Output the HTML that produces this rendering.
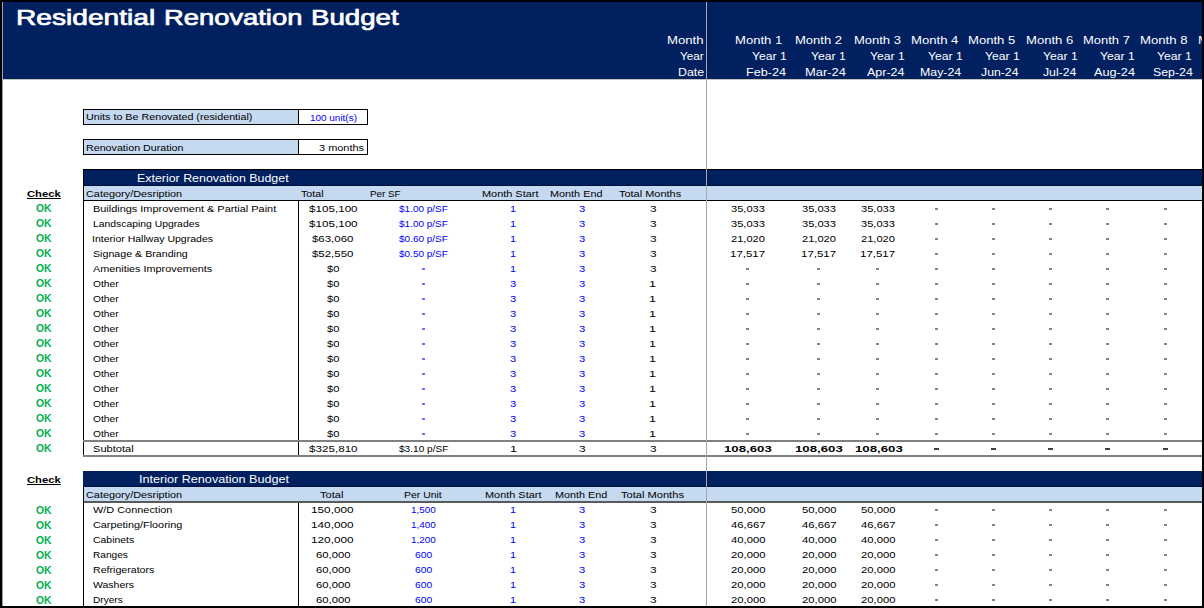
<!DOCTYPE html>
<html><head><meta charset="utf-8"><style>
html,body{margin:0;padding:0;width:1204px;height:608px;overflow:hidden;background:#fff}
#r{position:relative;width:1204px;height:608px;overflow:hidden;background:#fff}
#r>div{position:absolute}
.t{white-space:nowrap;font-family:"Liberation Sans",sans-serif;line-height:normal;transform-origin:0 0}
</style></head><body><div id="r">
<div style="left:3px;top:2px;width:1199px;height:77px;background:#002060"></div>
<div style="left:83px;top:109px;width:285px;height:16px;background:#000"></div>
<div style="left:84px;top:110px;width:214px;height:14px;background:#C5D9F1"></div>
<div style="left:299px;top:110px;width:68px;height:14px;background:#fff"></div>
<div style="left:83px;top:139px;width:285px;height:16px;background:#000"></div>
<div style="left:84px;top:140px;width:214px;height:14px;background:#C5D9F1"></div>
<div style="left:299px;top:140px;width:68px;height:14px;background:#fff"></div>
<div style="left:83px;top:169px;width:1119px;height:1px;background:#000"></div>
<div style="left:83px;top:170px;width:1119px;height:16px;background:#002060"></div>
<div style="left:83px;top:185px;width:1119px;height:1px;background:#00103a"></div>
<div style="left:83px;top:186px;width:1119px;height:14px;background:#C5D9F1"></div>
<div style="left:83px;top:169px;width:1px;height:31px;background:#000"></div>
<div style="left:83px;top:200px;width:1119px;height:1px;background:#000"></div>
<div style="left:935px;top:208px;width:3px;height:2px;background:#858585"></div>
<div style="left:992px;top:208px;width:3px;height:2px;background:#858585"></div>
<div style="left:1049px;top:208px;width:3px;height:2px;background:#858585"></div>
<div style="left:1106px;top:208px;width:3px;height:2px;background:#858585"></div>
<div style="left:1164px;top:208px;width:3px;height:2px;background:#858585"></div>
<div style="left:935px;top:223px;width:3px;height:2px;background:#858585"></div>
<div style="left:992px;top:223px;width:3px;height:2px;background:#858585"></div>
<div style="left:1049px;top:223px;width:3px;height:2px;background:#858585"></div>
<div style="left:1106px;top:223px;width:3px;height:2px;background:#858585"></div>
<div style="left:1164px;top:223px;width:3px;height:2px;background:#858585"></div>
<div style="left:935px;top:238px;width:3px;height:2px;background:#858585"></div>
<div style="left:992px;top:238px;width:3px;height:2px;background:#858585"></div>
<div style="left:1049px;top:238px;width:3px;height:2px;background:#858585"></div>
<div style="left:1106px;top:238px;width:3px;height:2px;background:#858585"></div>
<div style="left:1164px;top:238px;width:3px;height:2px;background:#858585"></div>
<div style="left:935px;top:253px;width:3px;height:2px;background:#858585"></div>
<div style="left:992px;top:253px;width:3px;height:2px;background:#858585"></div>
<div style="left:1049px;top:253px;width:3px;height:2px;background:#858585"></div>
<div style="left:1106px;top:253px;width:3px;height:2px;background:#858585"></div>
<div style="left:1164px;top:253px;width:3px;height:2px;background:#858585"></div>
<div style="left:422px;top:268px;width:3px;height:2px;background:#7070ff"></div>
<div style="left:746px;top:268px;width:3px;height:2px;background:#858585"></div>
<div style="left:817px;top:268px;width:3px;height:2px;background:#858585"></div>
<div style="left:876px;top:268px;width:3px;height:2px;background:#858585"></div>
<div style="left:935px;top:268px;width:3px;height:2px;background:#858585"></div>
<div style="left:992px;top:268px;width:3px;height:2px;background:#858585"></div>
<div style="left:1049px;top:268px;width:3px;height:2px;background:#858585"></div>
<div style="left:1106px;top:268px;width:3px;height:2px;background:#858585"></div>
<div style="left:1164px;top:268px;width:3px;height:2px;background:#858585"></div>
<div style="left:422px;top:283px;width:3px;height:2px;background:#7070ff"></div>
<div style="left:746px;top:283px;width:3px;height:2px;background:#858585"></div>
<div style="left:817px;top:283px;width:3px;height:2px;background:#858585"></div>
<div style="left:876px;top:283px;width:3px;height:2px;background:#858585"></div>
<div style="left:935px;top:283px;width:3px;height:2px;background:#858585"></div>
<div style="left:992px;top:283px;width:3px;height:2px;background:#858585"></div>
<div style="left:1049px;top:283px;width:3px;height:2px;background:#858585"></div>
<div style="left:1106px;top:283px;width:3px;height:2px;background:#858585"></div>
<div style="left:1164px;top:283px;width:3px;height:2px;background:#858585"></div>
<div style="left:422px;top:298px;width:3px;height:2px;background:#7070ff"></div>
<div style="left:746px;top:298px;width:3px;height:2px;background:#858585"></div>
<div style="left:817px;top:298px;width:3px;height:2px;background:#858585"></div>
<div style="left:876px;top:298px;width:3px;height:2px;background:#858585"></div>
<div style="left:935px;top:298px;width:3px;height:2px;background:#858585"></div>
<div style="left:992px;top:298px;width:3px;height:2px;background:#858585"></div>
<div style="left:1049px;top:298px;width:3px;height:2px;background:#858585"></div>
<div style="left:1106px;top:298px;width:3px;height:2px;background:#858585"></div>
<div style="left:1164px;top:298px;width:3px;height:2px;background:#858585"></div>
<div style="left:422px;top:313px;width:3px;height:2px;background:#7070ff"></div>
<div style="left:746px;top:313px;width:3px;height:2px;background:#858585"></div>
<div style="left:817px;top:313px;width:3px;height:2px;background:#858585"></div>
<div style="left:876px;top:313px;width:3px;height:2px;background:#858585"></div>
<div style="left:935px;top:313px;width:3px;height:2px;background:#858585"></div>
<div style="left:992px;top:313px;width:3px;height:2px;background:#858585"></div>
<div style="left:1049px;top:313px;width:3px;height:2px;background:#858585"></div>
<div style="left:1106px;top:313px;width:3px;height:2px;background:#858585"></div>
<div style="left:1164px;top:313px;width:3px;height:2px;background:#858585"></div>
<div style="left:422px;top:328px;width:3px;height:2px;background:#7070ff"></div>
<div style="left:746px;top:328px;width:3px;height:2px;background:#858585"></div>
<div style="left:817px;top:328px;width:3px;height:2px;background:#858585"></div>
<div style="left:876px;top:328px;width:3px;height:2px;background:#858585"></div>
<div style="left:935px;top:328px;width:3px;height:2px;background:#858585"></div>
<div style="left:992px;top:328px;width:3px;height:2px;background:#858585"></div>
<div style="left:1049px;top:328px;width:3px;height:2px;background:#858585"></div>
<div style="left:1106px;top:328px;width:3px;height:2px;background:#858585"></div>
<div style="left:1164px;top:328px;width:3px;height:2px;background:#858585"></div>
<div style="left:422px;top:343px;width:3px;height:2px;background:#7070ff"></div>
<div style="left:746px;top:343px;width:3px;height:2px;background:#858585"></div>
<div style="left:817px;top:343px;width:3px;height:2px;background:#858585"></div>
<div style="left:876px;top:343px;width:3px;height:2px;background:#858585"></div>
<div style="left:935px;top:343px;width:3px;height:2px;background:#858585"></div>
<div style="left:992px;top:343px;width:3px;height:2px;background:#858585"></div>
<div style="left:1049px;top:343px;width:3px;height:2px;background:#858585"></div>
<div style="left:1106px;top:343px;width:3px;height:2px;background:#858585"></div>
<div style="left:1164px;top:343px;width:3px;height:2px;background:#858585"></div>
<div style="left:422px;top:358px;width:3px;height:2px;background:#7070ff"></div>
<div style="left:746px;top:358px;width:3px;height:2px;background:#858585"></div>
<div style="left:817px;top:358px;width:3px;height:2px;background:#858585"></div>
<div style="left:876px;top:358px;width:3px;height:2px;background:#858585"></div>
<div style="left:935px;top:358px;width:3px;height:2px;background:#858585"></div>
<div style="left:992px;top:358px;width:3px;height:2px;background:#858585"></div>
<div style="left:1049px;top:358px;width:3px;height:2px;background:#858585"></div>
<div style="left:1106px;top:358px;width:3px;height:2px;background:#858585"></div>
<div style="left:1164px;top:358px;width:3px;height:2px;background:#858585"></div>
<div style="left:422px;top:373px;width:3px;height:2px;background:#7070ff"></div>
<div style="left:746px;top:373px;width:3px;height:2px;background:#858585"></div>
<div style="left:817px;top:373px;width:3px;height:2px;background:#858585"></div>
<div style="left:876px;top:373px;width:3px;height:2px;background:#858585"></div>
<div style="left:935px;top:373px;width:3px;height:2px;background:#858585"></div>
<div style="left:992px;top:373px;width:3px;height:2px;background:#858585"></div>
<div style="left:1049px;top:373px;width:3px;height:2px;background:#858585"></div>
<div style="left:1106px;top:373px;width:3px;height:2px;background:#858585"></div>
<div style="left:1164px;top:373px;width:3px;height:2px;background:#858585"></div>
<div style="left:422px;top:388px;width:3px;height:2px;background:#7070ff"></div>
<div style="left:746px;top:388px;width:3px;height:2px;background:#858585"></div>
<div style="left:817px;top:388px;width:3px;height:2px;background:#858585"></div>
<div style="left:876px;top:388px;width:3px;height:2px;background:#858585"></div>
<div style="left:935px;top:388px;width:3px;height:2px;background:#858585"></div>
<div style="left:992px;top:388px;width:3px;height:2px;background:#858585"></div>
<div style="left:1049px;top:388px;width:3px;height:2px;background:#858585"></div>
<div style="left:1106px;top:388px;width:3px;height:2px;background:#858585"></div>
<div style="left:1164px;top:388px;width:3px;height:2px;background:#858585"></div>
<div style="left:422px;top:403px;width:3px;height:2px;background:#7070ff"></div>
<div style="left:746px;top:403px;width:3px;height:2px;background:#858585"></div>
<div style="left:817px;top:403px;width:3px;height:2px;background:#858585"></div>
<div style="left:876px;top:403px;width:3px;height:2px;background:#858585"></div>
<div style="left:935px;top:403px;width:3px;height:2px;background:#858585"></div>
<div style="left:992px;top:403px;width:3px;height:2px;background:#858585"></div>
<div style="left:1049px;top:403px;width:3px;height:2px;background:#858585"></div>
<div style="left:1106px;top:403px;width:3px;height:2px;background:#858585"></div>
<div style="left:1164px;top:403px;width:3px;height:2px;background:#858585"></div>
<div style="left:422px;top:418px;width:3px;height:2px;background:#7070ff"></div>
<div style="left:746px;top:418px;width:3px;height:2px;background:#858585"></div>
<div style="left:817px;top:418px;width:3px;height:2px;background:#858585"></div>
<div style="left:876px;top:418px;width:3px;height:2px;background:#858585"></div>
<div style="left:935px;top:418px;width:3px;height:2px;background:#858585"></div>
<div style="left:992px;top:418px;width:3px;height:2px;background:#858585"></div>
<div style="left:1049px;top:418px;width:3px;height:2px;background:#858585"></div>
<div style="left:1106px;top:418px;width:3px;height:2px;background:#858585"></div>
<div style="left:1164px;top:418px;width:3px;height:2px;background:#858585"></div>
<div style="left:422px;top:433px;width:3px;height:2px;background:#7070ff"></div>
<div style="left:746px;top:433px;width:3px;height:2px;background:#858585"></div>
<div style="left:817px;top:433px;width:3px;height:2px;background:#858585"></div>
<div style="left:876px;top:433px;width:3px;height:2px;background:#858585"></div>
<div style="left:935px;top:433px;width:3px;height:2px;background:#858585"></div>
<div style="left:992px;top:433px;width:3px;height:2px;background:#858585"></div>
<div style="left:1049px;top:433px;width:3px;height:2px;background:#858585"></div>
<div style="left:1106px;top:433px;width:3px;height:2px;background:#858585"></div>
<div style="left:1164px;top:433px;width:3px;height:2px;background:#858585"></div>
<div style="left:83px;top:200px;width:1px;height:257px;background:#000"></div>
<div style="left:298px;top:201px;width:1px;height:256px;background:#000"></div>
<div style="left:83px;top:440px;width:1119px;height:2px;background:#808080"></div>
<div style="left:83px;top:455px;width:1119px;height:2px;background:#808080"></div>
<div style="left:934px;top:448px;width:5px;height:2px;background:#404040"></div>
<div style="left:991px;top:448px;width:5px;height:2px;background:#404040"></div>
<div style="left:1048px;top:448px;width:5px;height:2px;background:#404040"></div>
<div style="left:1105px;top:448px;width:5px;height:2px;background:#404040"></div>
<div style="left:1163px;top:448px;width:5px;height:2px;background:#404040"></div>
<div style="left:83px;top:471px;width:1119px;height:16px;background:#002060"></div>
<div style="left:83px;top:486px;width:1119px;height:1px;background:#00103a"></div>
<div style="left:83px;top:487px;width:1119px;height:14px;background:#C5D9F1"></div>
<div style="left:935px;top:509px;width:3px;height:2px;background:#858585"></div>
<div style="left:992px;top:509px;width:3px;height:2px;background:#858585"></div>
<div style="left:1049px;top:509px;width:3px;height:2px;background:#858585"></div>
<div style="left:1106px;top:509px;width:3px;height:2px;background:#858585"></div>
<div style="left:1164px;top:509px;width:3px;height:2px;background:#858585"></div>
<div style="left:935px;top:524px;width:3px;height:2px;background:#858585"></div>
<div style="left:992px;top:524px;width:3px;height:2px;background:#858585"></div>
<div style="left:1049px;top:524px;width:3px;height:2px;background:#858585"></div>
<div style="left:1106px;top:524px;width:3px;height:2px;background:#858585"></div>
<div style="left:1164px;top:524px;width:3px;height:2px;background:#858585"></div>
<div style="left:935px;top:539px;width:3px;height:2px;background:#858585"></div>
<div style="left:992px;top:539px;width:3px;height:2px;background:#858585"></div>
<div style="left:1049px;top:539px;width:3px;height:2px;background:#858585"></div>
<div style="left:1106px;top:539px;width:3px;height:2px;background:#858585"></div>
<div style="left:1164px;top:539px;width:3px;height:2px;background:#858585"></div>
<div style="left:935px;top:554px;width:3px;height:2px;background:#858585"></div>
<div style="left:992px;top:554px;width:3px;height:2px;background:#858585"></div>
<div style="left:1049px;top:554px;width:3px;height:2px;background:#858585"></div>
<div style="left:1106px;top:554px;width:3px;height:2px;background:#858585"></div>
<div style="left:1164px;top:554px;width:3px;height:2px;background:#858585"></div>
<div style="left:935px;top:569px;width:3px;height:2px;background:#858585"></div>
<div style="left:992px;top:569px;width:3px;height:2px;background:#858585"></div>
<div style="left:1049px;top:569px;width:3px;height:2px;background:#858585"></div>
<div style="left:1106px;top:569px;width:3px;height:2px;background:#858585"></div>
<div style="left:1164px;top:569px;width:3px;height:2px;background:#858585"></div>
<div style="left:935px;top:584px;width:3px;height:2px;background:#858585"></div>
<div style="left:992px;top:584px;width:3px;height:2px;background:#858585"></div>
<div style="left:1049px;top:584px;width:3px;height:2px;background:#858585"></div>
<div style="left:1106px;top:584px;width:3px;height:2px;background:#858585"></div>
<div style="left:1164px;top:584px;width:3px;height:2px;background:#858585"></div>
<div style="left:935px;top:599px;width:3px;height:2px;background:#858585"></div>
<div style="left:992px;top:599px;width:3px;height:2px;background:#858585"></div>
<div style="left:1049px;top:599px;width:3px;height:2px;background:#858585"></div>
<div style="left:1106px;top:599px;width:3px;height:2px;background:#858585"></div>
<div style="left:1164px;top:599px;width:3px;height:2px;background:#858585"></div>
<div style="left:83px;top:501px;width:1119px;height:2px;background:#5a5a5a"></div>
<div style="left:83px;top:487px;width:1px;height:119px;background:#000"></div>
<div style="left:298px;top:503px;width:1px;height:103px;background:#000"></div>
<div class="t" style="left:15.64px;top:6.04px;font-size:21.5px;font-weight:normal;color:#fff;transform:scaleX(1.3087);-webkit-text-stroke:0.7px #fff;">Residential</div>
<div class="t" style="left:163.98px;top:6.04px;font-size:21.5px;font-weight:normal;color:#fff;transform:scaleX(1.2720);-webkit-text-stroke:0.7px #fff;">Renovation</div>
<div class="t" style="left:311.06px;top:6.04px;font-size:21.5px;font-weight:normal;color:#fff;transform:scaleX(1.2866);-webkit-text-stroke:0.7px #fff;">Budget</div>
<div class="t" style="left:667.40px;top:33.84px;font-size:11px;font-weight:normal;color:#fff;transform:scaleX(1.1966);">Month</div>
<div class="t" style="left:680.30px;top:49.65px;font-size:11px;font-weight:normal;color:#fff;transform:scaleX(1.0636);">Year</div>
<div class="t" style="left:678.18px;top:65.75px;font-size:11px;font-weight:normal;color:#fff;transform:scaleX(1.1227);">Date</div>
<div class="t" style="left:735.21px;top:33.84px;font-size:11px;font-weight:normal;color:#fff;transform:scaleX(1.1872);">Month 1</div>
<div class="t" style="left:751.90px;top:49.65px;font-size:11px;font-weight:normal;color:#fff;transform:scaleX(1.1065);">Year 1</div>
<div class="t" style="left:746.35px;top:65.75px;font-size:11px;font-weight:normal;color:#fff;transform:scaleX(1.1500);">Feb-24</div>
<div class="t" style="left:794.52px;top:33.84px;font-size:11px;font-weight:normal;color:#fff;transform:scaleX(1.1846);">Month 2</div>
<div class="t" style="left:811.20px;top:49.65px;font-size:11px;font-weight:normal;color:#fff;transform:scaleX(1.1065);">Year 1</div>
<div class="t" style="left:804.53px;top:65.75px;font-size:11px;font-weight:normal;color:#fff;transform:scaleX(1.1706);">Mar-24</div>
<div class="t" style="left:853.52px;top:33.84px;font-size:11px;font-weight:normal;color:#fff;transform:scaleX(1.1795);">Month 3</div>
<div class="t" style="left:870.20px;top:49.65px;font-size:11px;font-weight:normal;color:#fff;transform:scaleX(1.1065);">Year 1</div>
<div class="t" style="left:867.10px;top:65.75px;font-size:11px;font-weight:normal;color:#fff;transform:scaleX(1.1333);">Apr-24</div>
<div class="t" style="left:910.91px;top:33.84px;font-size:11px;font-weight:normal;color:#fff;transform:scaleX(1.1923);">Month 4</div>
<div class="t" style="left:927.60px;top:49.65px;font-size:11px;font-weight:normal;color:#fff;transform:scaleX(1.1065);">Year 1</div>
<div class="t" style="left:920.38px;top:65.75px;font-size:11px;font-weight:normal;color:#fff;transform:scaleX(1.1222);">May-24</div>
<div class="t" style="left:968.21px;top:33.84px;font-size:11px;font-weight:normal;color:#fff;transform:scaleX(1.1872);">Month 5</div>
<div class="t" style="left:984.90px;top:49.65px;font-size:11px;font-weight:normal;color:#fff;transform:scaleX(1.1065);">Year 1</div>
<div class="t" style="left:981.30px;top:65.75px;font-size:11px;font-weight:normal;color:#fff;transform:scaleX(1.1147);">Jun-24</div>
<div class="t" style="left:1025.61px;top:33.84px;font-size:11px;font-weight:normal;color:#fff;transform:scaleX(1.1897);">Month 6</div>
<div class="t" style="left:1042.50px;top:49.65px;font-size:11px;font-weight:normal;color:#fff;transform:scaleX(1.1065);">Year 1</div>
<div class="t" style="left:1043.40px;top:65.75px;font-size:11px;font-weight:normal;color:#fff;transform:scaleX(1.1133);">Jul-24</div>
<div class="t" style="left:1083.12px;top:33.84px;font-size:11px;font-weight:normal;color:#fff;transform:scaleX(1.1795);">Month 7</div>
<div class="t" style="left:1100.00px;top:49.65px;font-size:11px;font-weight:normal;color:#fff;transform:scaleX(1.1065);">Year 1</div>
<div class="t" style="left:1093.90px;top:65.75px;font-size:11px;font-weight:normal;color:#fff;transform:scaleX(1.1543);">Aug-24</div>
<div class="t" style="left:1140.00px;top:33.84px;font-size:11px;font-weight:normal;color:#fff;transform:scaleX(1.1974);">Month 8</div>
<div class="t" style="left:1157.40px;top:49.65px;font-size:11px;font-weight:normal;color:#fff;transform:scaleX(1.1065);">Year 1</div>
<div class="t" style="left:1152.50px;top:65.75px;font-size:11px;font-weight:normal;color:#fff;transform:scaleX(1.1200);">Sep-24</div>
<div class="t" style="left:1197.51px;top:33.84px;font-size:11px;font-weight:normal;color:#fff;transform:scaleX(1.1872);">Month 9</div>
<div class="t" style="left:85.50px;top:112.36px;font-size:9px;font-weight:normal;color:#000;transform:scaleX(1.1921);">Units to Be Renovated (residential)</div>
<div class="t" style="left:309.80px;top:112.67px;font-size:9.2px;font-weight:normal;color:#0000FF;transform:scaleX(1.0814);">100 unit(s)</div>
<div class="t" style="left:86.00px;top:142.66px;font-size:9px;font-weight:normal;color:#000;transform:scaleX(1.1878);">Renovation Duration</div>
<div class="t" style="left:319.00px;top:142.02px;font-size:9.7px;font-weight:normal;color:#000;transform:scaleX(1.1300);">3 months</div>
<div class="t" style="left:136.67px;top:172.04px;font-size:11px;font-weight:normal;color:#fff;transform:scaleX(1.1269);">Exterior Renovation Budget</div>
<div class="t" style="left:85.50px;top:188.75px;font-size:9px;font-weight:normal;color:#000;transform:scaleX(1.2089);">Category/Desription</div>
<div class="t" style="left:301.10px;top:188.75px;font-size:9px;font-weight:normal;color:#000;transform:scaleX(1.1895);">Total</div>
<div class="t" style="left:369.70px;top:188.75px;font-size:9px;font-weight:normal;color:#000;transform:scaleX(1.0929);">Per SF</div>
<div class="t" style="left:481.50px;top:188.75px;font-size:9px;font-weight:normal;color:#000;transform:scaleX(1.2128);">Month Start</div>
<div class="t" style="left:550.30px;top:188.75px;font-size:9px;font-weight:normal;color:#000;transform:scaleX(1.2047);">Month End</div>
<div class="t" style="left:618.90px;top:188.75px;font-size:9px;font-weight:normal;color:#000;transform:scaleX(1.2176);">Total Months</div>
<div class="t" style="left:26.70px;top:187.72px;font-size:9.7px;font-weight:bold;color:#000;transform:scaleX(1.1586);text-decoration:underline;">Check</div>
<div class="t" style="left:36.25px;top:203.28px;font-size:10.3px;font-weight:bold;color:#00B050;transform:scaleX(1.0067);">OK</div>
<div class="t" style="left:93.30px;top:203.66px;font-size:9px;font-weight:normal;color:#000;transform:scaleX(1.2126);">Buildings Improvement &amp; Partial Paint</div>
<div class="t" style="left:308.95px;top:203.02px;font-size:9.7px;font-weight:normal;color:#000;transform:scaleX(1.2025);">$105,100</div>
<div class="t" style="left:399.05px;top:204.07px;font-size:9.2px;font-weight:normal;color:#0000FF;transform:scaleX(1.0867);">$1.00 p/SF</div>
<div class="t" style="left:510.45px;top:204.07px;font-size:9.2px;font-weight:normal;color:#0000FF;transform:scaleX(1.1800);">1</div>
<div class="t" style="left:578.95px;top:204.07px;font-size:9.2px;font-weight:normal;color:#0000FF;transform:scaleX(1.2200);">3</div>
<div class="t" style="left:649.55px;top:203.02px;font-size:9.7px;font-weight:normal;color:#000;transform:scaleX(1.2200);">3</div>
<div class="t" style="left:731.10px;top:203.02px;font-size:9.7px;font-weight:normal;color:#000;transform:scaleX(1.1467);">35,033</div>
<div class="t" style="left:801.90px;top:203.02px;font-size:9.7px;font-weight:normal;color:#000;transform:scaleX(1.1467);">35,033</div>
<div class="t" style="left:861.20px;top:203.02px;font-size:9.7px;font-weight:normal;color:#000;transform:scaleX(1.1467);">35,033</div>
<div class="t" style="left:36.25px;top:218.28px;font-size:10.3px;font-weight:bold;color:#00B050;transform:scaleX(1.0067);">OK</div>
<div class="t" style="left:93.30px;top:218.66px;font-size:9px;font-weight:normal;color:#000;transform:scaleX(1.1516);">Landscaping Upgrades</div>
<div class="t" style="left:308.95px;top:218.02px;font-size:9.7px;font-weight:normal;color:#000;transform:scaleX(1.2025);">$105,100</div>
<div class="t" style="left:399.05px;top:219.07px;font-size:9.2px;font-weight:normal;color:#0000FF;transform:scaleX(1.0867);">$1.00 p/SF</div>
<div class="t" style="left:510.45px;top:219.07px;font-size:9.2px;font-weight:normal;color:#0000FF;transform:scaleX(1.1800);">1</div>
<div class="t" style="left:578.95px;top:219.07px;font-size:9.2px;font-weight:normal;color:#0000FF;transform:scaleX(1.2200);">3</div>
<div class="t" style="left:649.55px;top:218.02px;font-size:9.7px;font-weight:normal;color:#000;transform:scaleX(1.2200);">3</div>
<div class="t" style="left:731.10px;top:218.02px;font-size:9.7px;font-weight:normal;color:#000;transform:scaleX(1.1467);">35,033</div>
<div class="t" style="left:801.90px;top:218.02px;font-size:9.7px;font-weight:normal;color:#000;transform:scaleX(1.1467);">35,033</div>
<div class="t" style="left:861.20px;top:218.02px;font-size:9.7px;font-weight:normal;color:#000;transform:scaleX(1.1467);">35,033</div>
<div class="t" style="left:36.25px;top:233.28px;font-size:10.3px;font-weight:bold;color:#00B050;transform:scaleX(1.0067);">OK</div>
<div class="t" style="left:92.13px;top:233.66px;font-size:9px;font-weight:normal;color:#000;transform:scaleX(1.1689);">Interior Hallway Upgrades</div>
<div class="t" style="left:312.30px;top:233.02px;font-size:9.7px;font-weight:normal;color:#000;transform:scaleX(1.1829);">$63,060</div>
<div class="t" style="left:399.05px;top:234.07px;font-size:9.2px;font-weight:normal;color:#0000FF;transform:scaleX(1.0867);">$0.60 p/SF</div>
<div class="t" style="left:510.45px;top:234.07px;font-size:9.2px;font-weight:normal;color:#0000FF;transform:scaleX(1.1800);">1</div>
<div class="t" style="left:578.95px;top:234.07px;font-size:9.2px;font-weight:normal;color:#0000FF;transform:scaleX(1.2200);">3</div>
<div class="t" style="left:649.55px;top:233.02px;font-size:9.7px;font-weight:normal;color:#000;transform:scaleX(1.2200);">3</div>
<div class="t" style="left:731.10px;top:233.02px;font-size:9.7px;font-weight:normal;color:#000;transform:scaleX(1.1467);">21,020</div>
<div class="t" style="left:801.90px;top:233.02px;font-size:9.7px;font-weight:normal;color:#000;transform:scaleX(1.1467);">21,020</div>
<div class="t" style="left:861.20px;top:233.02px;font-size:9.7px;font-weight:normal;color:#000;transform:scaleX(1.1467);">21,020</div>
<div class="t" style="left:36.25px;top:248.28px;font-size:10.3px;font-weight:bold;color:#00B050;transform:scaleX(1.0067);">OK</div>
<div class="t" style="left:93.30px;top:248.66px;font-size:9px;font-weight:normal;color:#000;transform:scaleX(1.1838);">Signage &amp; Branding</div>
<div class="t" style="left:312.30px;top:248.02px;font-size:9.7px;font-weight:normal;color:#000;transform:scaleX(1.1829);">$52,550</div>
<div class="t" style="left:399.05px;top:249.07px;font-size:9.2px;font-weight:normal;color:#0000FF;transform:scaleX(1.0867);">$0.50 p/SF</div>
<div class="t" style="left:510.45px;top:249.07px;font-size:9.2px;font-weight:normal;color:#0000FF;transform:scaleX(1.1800);">1</div>
<div class="t" style="left:578.95px;top:249.07px;font-size:9.2px;font-weight:normal;color:#0000FF;transform:scaleX(1.2200);">3</div>
<div class="t" style="left:649.55px;top:248.02px;font-size:9.7px;font-weight:normal;color:#000;transform:scaleX(1.2200);">3</div>
<div class="t" style="left:729.91px;top:248.02px;font-size:9.7px;font-weight:normal;color:#000;transform:scaleX(1.1862);">17,517</div>
<div class="t" style="left:800.71px;top:248.02px;font-size:9.7px;font-weight:normal;color:#000;transform:scaleX(1.1862);">17,517</div>
<div class="t" style="left:860.01px;top:248.02px;font-size:9.7px;font-weight:normal;color:#000;transform:scaleX(1.1862);">17,517</div>
<div class="t" style="left:36.25px;top:263.28px;font-size:10.3px;font-weight:bold;color:#00B050;transform:scaleX(1.0067);">OK</div>
<div class="t" style="left:93.30px;top:263.66px;font-size:9px;font-weight:normal;color:#000;transform:scaleX(1.2030);">Amenities Improvements</div>
<div class="t" style="left:326.65px;top:263.02px;font-size:9.7px;font-weight:normal;color:#000;transform:scaleX(1.1545);">$0</div>
<div class="t" style="left:510.45px;top:264.07px;font-size:9.2px;font-weight:normal;color:#0000FF;transform:scaleX(1.1800);">1</div>
<div class="t" style="left:578.95px;top:264.07px;font-size:9.2px;font-weight:normal;color:#0000FF;transform:scaleX(1.2200);">3</div>
<div class="t" style="left:649.55px;top:263.02px;font-size:9.7px;font-weight:normal;color:#000;transform:scaleX(1.2200);">3</div>
<div class="t" style="left:36.25px;top:278.28px;font-size:10.3px;font-weight:bold;color:#00B050;transform:scaleX(1.0067);">OK</div>
<div class="t" style="left:93.30px;top:278.66px;font-size:9px;font-weight:normal;color:#000;transform:scaleX(1.1391);">Other</div>
<div class="t" style="left:326.65px;top:278.02px;font-size:9.7px;font-weight:normal;color:#000;transform:scaleX(1.1545);">$0</div>
<div class="t" style="left:510.35px;top:279.07px;font-size:9.2px;font-weight:normal;color:#0000FF;transform:scaleX(1.2200);">3</div>
<div class="t" style="left:578.95px;top:279.07px;font-size:9.2px;font-weight:normal;color:#0000FF;transform:scaleX(1.2200);">3</div>
<div class="t" style="left:648.70px;top:278.02px;font-size:9.7px;font-weight:normal;color:#000;transform:scaleX(1.3000);">1</div>
<div class="t" style="left:36.25px;top:293.28px;font-size:10.3px;font-weight:bold;color:#00B050;transform:scaleX(1.0067);">OK</div>
<div class="t" style="left:93.30px;top:293.66px;font-size:9px;font-weight:normal;color:#000;transform:scaleX(1.1391);">Other</div>
<div class="t" style="left:326.65px;top:293.02px;font-size:9.7px;font-weight:normal;color:#000;transform:scaleX(1.1545);">$0</div>
<div class="t" style="left:510.35px;top:294.07px;font-size:9.2px;font-weight:normal;color:#0000FF;transform:scaleX(1.2200);">3</div>
<div class="t" style="left:578.95px;top:294.07px;font-size:9.2px;font-weight:normal;color:#0000FF;transform:scaleX(1.2200);">3</div>
<div class="t" style="left:648.70px;top:293.02px;font-size:9.7px;font-weight:normal;color:#000;transform:scaleX(1.3000);">1</div>
<div class="t" style="left:36.25px;top:308.28px;font-size:10.3px;font-weight:bold;color:#00B050;transform:scaleX(1.0067);">OK</div>
<div class="t" style="left:93.30px;top:308.66px;font-size:9px;font-weight:normal;color:#000;transform:scaleX(1.1391);">Other</div>
<div class="t" style="left:326.65px;top:308.02px;font-size:9.7px;font-weight:normal;color:#000;transform:scaleX(1.1545);">$0</div>
<div class="t" style="left:510.35px;top:309.07px;font-size:9.2px;font-weight:normal;color:#0000FF;transform:scaleX(1.2200);">3</div>
<div class="t" style="left:578.95px;top:309.07px;font-size:9.2px;font-weight:normal;color:#0000FF;transform:scaleX(1.2200);">3</div>
<div class="t" style="left:648.70px;top:308.02px;font-size:9.7px;font-weight:normal;color:#000;transform:scaleX(1.3000);">1</div>
<div class="t" style="left:36.25px;top:323.28px;font-size:10.3px;font-weight:bold;color:#00B050;transform:scaleX(1.0067);">OK</div>
<div class="t" style="left:93.30px;top:323.66px;font-size:9px;font-weight:normal;color:#000;transform:scaleX(1.1391);">Other</div>
<div class="t" style="left:326.65px;top:323.02px;font-size:9.7px;font-weight:normal;color:#000;transform:scaleX(1.1545);">$0</div>
<div class="t" style="left:510.35px;top:324.07px;font-size:9.2px;font-weight:normal;color:#0000FF;transform:scaleX(1.2200);">3</div>
<div class="t" style="left:578.95px;top:324.07px;font-size:9.2px;font-weight:normal;color:#0000FF;transform:scaleX(1.2200);">3</div>
<div class="t" style="left:648.70px;top:323.02px;font-size:9.7px;font-weight:normal;color:#000;transform:scaleX(1.3000);">1</div>
<div class="t" style="left:36.25px;top:338.28px;font-size:10.3px;font-weight:bold;color:#00B050;transform:scaleX(1.0067);">OK</div>
<div class="t" style="left:93.30px;top:338.66px;font-size:9px;font-weight:normal;color:#000;transform:scaleX(1.1391);">Other</div>
<div class="t" style="left:326.65px;top:338.02px;font-size:9.7px;font-weight:normal;color:#000;transform:scaleX(1.1545);">$0</div>
<div class="t" style="left:510.35px;top:339.07px;font-size:9.2px;font-weight:normal;color:#0000FF;transform:scaleX(1.2200);">3</div>
<div class="t" style="left:578.95px;top:339.07px;font-size:9.2px;font-weight:normal;color:#0000FF;transform:scaleX(1.2200);">3</div>
<div class="t" style="left:648.70px;top:338.02px;font-size:9.7px;font-weight:normal;color:#000;transform:scaleX(1.3000);">1</div>
<div class="t" style="left:36.25px;top:353.28px;font-size:10.3px;font-weight:bold;color:#00B050;transform:scaleX(1.0067);">OK</div>
<div class="t" style="left:93.30px;top:353.66px;font-size:9px;font-weight:normal;color:#000;transform:scaleX(1.1391);">Other</div>
<div class="t" style="left:326.65px;top:353.02px;font-size:9.7px;font-weight:normal;color:#000;transform:scaleX(1.1545);">$0</div>
<div class="t" style="left:510.35px;top:354.07px;font-size:9.2px;font-weight:normal;color:#0000FF;transform:scaleX(1.2200);">3</div>
<div class="t" style="left:578.95px;top:354.07px;font-size:9.2px;font-weight:normal;color:#0000FF;transform:scaleX(1.2200);">3</div>
<div class="t" style="left:648.70px;top:353.02px;font-size:9.7px;font-weight:normal;color:#000;transform:scaleX(1.3000);">1</div>
<div class="t" style="left:36.25px;top:368.28px;font-size:10.3px;font-weight:bold;color:#00B050;transform:scaleX(1.0067);">OK</div>
<div class="t" style="left:93.30px;top:368.66px;font-size:9px;font-weight:normal;color:#000;transform:scaleX(1.1391);">Other</div>
<div class="t" style="left:326.65px;top:368.02px;font-size:9.7px;font-weight:normal;color:#000;transform:scaleX(1.1545);">$0</div>
<div class="t" style="left:510.35px;top:369.07px;font-size:9.2px;font-weight:normal;color:#0000FF;transform:scaleX(1.2200);">3</div>
<div class="t" style="left:578.95px;top:369.07px;font-size:9.2px;font-weight:normal;color:#0000FF;transform:scaleX(1.2200);">3</div>
<div class="t" style="left:648.70px;top:368.02px;font-size:9.7px;font-weight:normal;color:#000;transform:scaleX(1.3000);">1</div>
<div class="t" style="left:36.25px;top:383.28px;font-size:10.3px;font-weight:bold;color:#00B050;transform:scaleX(1.0067);">OK</div>
<div class="t" style="left:93.30px;top:383.66px;font-size:9px;font-weight:normal;color:#000;transform:scaleX(1.1391);">Other</div>
<div class="t" style="left:326.65px;top:383.02px;font-size:9.7px;font-weight:normal;color:#000;transform:scaleX(1.1545);">$0</div>
<div class="t" style="left:510.35px;top:384.07px;font-size:9.2px;font-weight:normal;color:#0000FF;transform:scaleX(1.2200);">3</div>
<div class="t" style="left:578.95px;top:384.07px;font-size:9.2px;font-weight:normal;color:#0000FF;transform:scaleX(1.2200);">3</div>
<div class="t" style="left:648.70px;top:383.02px;font-size:9.7px;font-weight:normal;color:#000;transform:scaleX(1.3000);">1</div>
<div class="t" style="left:36.25px;top:398.28px;font-size:10.3px;font-weight:bold;color:#00B050;transform:scaleX(1.0067);">OK</div>
<div class="t" style="left:93.30px;top:398.66px;font-size:9px;font-weight:normal;color:#000;transform:scaleX(1.1391);">Other</div>
<div class="t" style="left:326.65px;top:398.02px;font-size:9.7px;font-weight:normal;color:#000;transform:scaleX(1.1545);">$0</div>
<div class="t" style="left:510.35px;top:399.07px;font-size:9.2px;font-weight:normal;color:#0000FF;transform:scaleX(1.2200);">3</div>
<div class="t" style="left:578.95px;top:399.07px;font-size:9.2px;font-weight:normal;color:#0000FF;transform:scaleX(1.2200);">3</div>
<div class="t" style="left:648.70px;top:398.02px;font-size:9.7px;font-weight:normal;color:#000;transform:scaleX(1.3000);">1</div>
<div class="t" style="left:36.25px;top:413.28px;font-size:10.3px;font-weight:bold;color:#00B050;transform:scaleX(1.0067);">OK</div>
<div class="t" style="left:93.30px;top:413.66px;font-size:9px;font-weight:normal;color:#000;transform:scaleX(1.1391);">Other</div>
<div class="t" style="left:326.65px;top:413.02px;font-size:9.7px;font-weight:normal;color:#000;transform:scaleX(1.1545);">$0</div>
<div class="t" style="left:510.35px;top:414.07px;font-size:9.2px;font-weight:normal;color:#0000FF;transform:scaleX(1.2200);">3</div>
<div class="t" style="left:578.95px;top:414.07px;font-size:9.2px;font-weight:normal;color:#0000FF;transform:scaleX(1.2200);">3</div>
<div class="t" style="left:648.70px;top:413.02px;font-size:9.7px;font-weight:normal;color:#000;transform:scaleX(1.3000);">1</div>
<div class="t" style="left:36.25px;top:428.28px;font-size:10.3px;font-weight:bold;color:#00B050;transform:scaleX(1.0067);">OK</div>
<div class="t" style="left:93.30px;top:428.66px;font-size:9px;font-weight:normal;color:#000;transform:scaleX(1.1391);">Other</div>
<div class="t" style="left:326.65px;top:428.02px;font-size:9.7px;font-weight:normal;color:#000;transform:scaleX(1.1545);">$0</div>
<div class="t" style="left:510.35px;top:429.07px;font-size:9.2px;font-weight:normal;color:#0000FF;transform:scaleX(1.2200);">3</div>
<div class="t" style="left:578.95px;top:429.07px;font-size:9.2px;font-weight:normal;color:#0000FF;transform:scaleX(1.2200);">3</div>
<div class="t" style="left:648.70px;top:428.02px;font-size:9.7px;font-weight:normal;color:#000;transform:scaleX(1.3000);">1</div>
<div class="t" style="left:36.25px;top:443.28px;font-size:10.3px;font-weight:bold;color:#00B050;transform:scaleX(1.0067);">OK</div>
<div class="t" style="left:93.30px;top:443.66px;font-size:9px;font-weight:normal;color:#000;transform:scaleX(1.2303);">Subtotal</div>
<div class="t" style="left:308.95px;top:443.02px;font-size:9.7px;font-weight:normal;color:#000;transform:scaleX(1.2025);">$325,810</div>
<div class="t" style="left:398.85px;top:443.66px;font-size:9px;font-weight:normal;color:#000;transform:scaleX(1.1205);">$3.10 p/SF</div>
<div class="t" style="left:509.50px;top:443.02px;font-size:9.7px;font-weight:normal;color:#000;transform:scaleX(1.3000);">1</div>
<div class="t" style="left:578.95px;top:443.02px;font-size:9.7px;font-weight:normal;color:#000;transform:scaleX(1.2200);">3</div>
<div class="t" style="left:649.55px;top:443.02px;font-size:9.7px;font-weight:normal;color:#000;transform:scaleX(1.2200);">3</div>
<div class="t" style="left:724.45px;top:443.02px;font-size:9.7px;font-weight:bold;color:#000;transform:scaleX(1.3629);">108,603</div>
<div class="t" style="left:795.25px;top:443.02px;font-size:9.7px;font-weight:bold;color:#000;transform:scaleX(1.3629);">108,603</div>
<div class="t" style="left:854.55px;top:443.02px;font-size:9.7px;font-weight:bold;color:#000;transform:scaleX(1.3629);">108,603</div>
<div class="t" style="left:138.65px;top:473.44px;font-size:11px;font-weight:normal;color:#fff;transform:scaleX(1.1462);">Interior Renovation Budget</div>
<div class="t" style="left:85.50px;top:490.25px;font-size:9px;font-weight:normal;color:#000;transform:scaleX(1.2089);">Category/Desription</div>
<div class="t" style="left:319.50px;top:490.25px;font-size:9px;font-weight:normal;color:#000;transform:scaleX(1.2316);">Total</div>
<div class="t" style="left:404.30px;top:490.25px;font-size:9px;font-weight:normal;color:#000;transform:scaleX(1.1606);">Per Unit</div>
<div class="t" style="left:485.40px;top:490.25px;font-size:9px;font-weight:normal;color:#000;transform:scaleX(1.2128);">Month Start</div>
<div class="t" style="left:554.90px;top:490.25px;font-size:9px;font-weight:normal;color:#000;transform:scaleX(1.1977);">Month End</div>
<div class="t" style="left:621.00px;top:490.25px;font-size:9px;font-weight:normal;color:#000;transform:scaleX(1.2333);">Total Months</div>
<div class="t" style="left:26.70px;top:474.02px;font-size:9.7px;font-weight:bold;color:#000;transform:scaleX(1.1586);text-decoration:underline;">Check</div>
<div class="t" style="left:36.25px;top:504.58px;font-size:10.3px;font-weight:bold;color:#00B050;transform:scaleX(1.0067);">OK</div>
<div class="t" style="left:93.30px;top:504.96px;font-size:9px;font-weight:normal;color:#000;transform:scaleX(1.2123);">W/D Connection</div>
<div class="t" style="left:311.14px;top:504.32px;font-size:9.7px;font-weight:normal;color:#000;transform:scaleX(1.2147);">150,000</div>
<div class="t" style="left:411.10px;top:505.37px;font-size:9.2px;font-weight:normal;color:#0000FF;transform:scaleX(1.0783);">1,500</div>
<div class="t" style="left:510.45px;top:505.37px;font-size:9.2px;font-weight:normal;color:#0000FF;transform:scaleX(1.1800);">1</div>
<div class="t" style="left:578.95px;top:505.37px;font-size:9.2px;font-weight:normal;color:#0000FF;transform:scaleX(1.2200);">3</div>
<div class="t" style="left:649.55px;top:504.32px;font-size:9.7px;font-weight:normal;color:#000;transform:scaleX(1.2200);">3</div>
<div class="t" style="left:730.85px;top:504.32px;font-size:9.7px;font-weight:normal;color:#000;transform:scaleX(1.1633);">50,000</div>
<div class="t" style="left:801.65px;top:504.32px;font-size:9.7px;font-weight:normal;color:#000;transform:scaleX(1.1633);">50,000</div>
<div class="t" style="left:860.95px;top:504.32px;font-size:9.7px;font-weight:normal;color:#000;transform:scaleX(1.1633);">50,000</div>
<div class="t" style="left:36.25px;top:519.58px;font-size:10.3px;font-weight:bold;color:#00B050;transform:scaleX(1.0067);">OK</div>
<div class="t" style="left:93.30px;top:519.96px;font-size:9px;font-weight:normal;color:#000;transform:scaleX(1.2054);">Carpeting/Flooring</div>
<div class="t" style="left:311.14px;top:519.32px;font-size:9.7px;font-weight:normal;color:#000;transform:scaleX(1.2147);">140,000</div>
<div class="t" style="left:411.10px;top:520.37px;font-size:9.2px;font-weight:normal;color:#0000FF;transform:scaleX(1.0783);">1,400</div>
<div class="t" style="left:510.45px;top:520.37px;font-size:9.2px;font-weight:normal;color:#0000FF;transform:scaleX(1.1800);">1</div>
<div class="t" style="left:578.95px;top:520.37px;font-size:9.2px;font-weight:normal;color:#0000FF;transform:scaleX(1.2200);">3</div>
<div class="t" style="left:649.55px;top:519.32px;font-size:9.7px;font-weight:normal;color:#000;transform:scaleX(1.2200);">3</div>
<div class="t" style="left:730.85px;top:519.32px;font-size:9.7px;font-weight:normal;color:#000;transform:scaleX(1.1633);">46,667</div>
<div class="t" style="left:801.65px;top:519.32px;font-size:9.7px;font-weight:normal;color:#000;transform:scaleX(1.1633);">46,667</div>
<div class="t" style="left:860.95px;top:519.32px;font-size:9.7px;font-weight:normal;color:#000;transform:scaleX(1.1633);">46,667</div>
<div class="t" style="left:36.25px;top:534.58px;font-size:10.3px;font-weight:bold;color:#00B050;transform:scaleX(1.0067);">OK</div>
<div class="t" style="left:93.30px;top:534.96px;font-size:9px;font-weight:normal;color:#000;transform:scaleX(1.1611);">Cabinets</div>
<div class="t" style="left:311.14px;top:534.32px;font-size:9.7px;font-weight:normal;color:#000;transform:scaleX(1.2147);">120,000</div>
<div class="t" style="left:411.10px;top:535.37px;font-size:9.2px;font-weight:normal;color:#0000FF;transform:scaleX(1.0783);">1,200</div>
<div class="t" style="left:510.45px;top:535.37px;font-size:9.2px;font-weight:normal;color:#0000FF;transform:scaleX(1.1800);">1</div>
<div class="t" style="left:578.95px;top:535.37px;font-size:9.2px;font-weight:normal;color:#0000FF;transform:scaleX(1.2200);">3</div>
<div class="t" style="left:649.55px;top:534.32px;font-size:9.7px;font-weight:normal;color:#000;transform:scaleX(1.2200);">3</div>
<div class="t" style="left:730.85px;top:534.32px;font-size:9.7px;font-weight:normal;color:#000;transform:scaleX(1.1633);">40,000</div>
<div class="t" style="left:801.65px;top:534.32px;font-size:9.7px;font-weight:normal;color:#000;transform:scaleX(1.1633);">40,000</div>
<div class="t" style="left:860.95px;top:534.32px;font-size:9.7px;font-weight:normal;color:#000;transform:scaleX(1.1633);">40,000</div>
<div class="t" style="left:36.25px;top:549.58px;font-size:10.3px;font-weight:bold;color:#00B050;transform:scaleX(1.0067);">OK</div>
<div class="t" style="left:93.30px;top:549.96px;font-size:9px;font-weight:normal;color:#000;transform:scaleX(1.1226);">Ranges</div>
<div class="t" style="left:315.55px;top:549.32px;font-size:9.7px;font-weight:normal;color:#000;transform:scaleX(1.1633);">60,000</div>
<div class="t" style="left:415.05px;top:550.37px;font-size:9.2px;font-weight:normal;color:#0000FF;transform:scaleX(1.1267);">600</div>
<div class="t" style="left:510.45px;top:550.37px;font-size:9.2px;font-weight:normal;color:#0000FF;transform:scaleX(1.1800);">1</div>
<div class="t" style="left:578.95px;top:550.37px;font-size:9.2px;font-weight:normal;color:#0000FF;transform:scaleX(1.2200);">3</div>
<div class="t" style="left:649.55px;top:549.32px;font-size:9.7px;font-weight:normal;color:#000;transform:scaleX(1.2200);">3</div>
<div class="t" style="left:730.85px;top:549.32px;font-size:9.7px;font-weight:normal;color:#000;transform:scaleX(1.1633);">20,000</div>
<div class="t" style="left:801.65px;top:549.32px;font-size:9.7px;font-weight:normal;color:#000;transform:scaleX(1.1633);">20,000</div>
<div class="t" style="left:860.95px;top:549.32px;font-size:9.7px;font-weight:normal;color:#000;transform:scaleX(1.1633);">20,000</div>
<div class="t" style="left:36.25px;top:564.58px;font-size:10.3px;font-weight:bold;color:#00B050;transform:scaleX(1.0067);">OK</div>
<div class="t" style="left:93.30px;top:564.96px;font-size:9px;font-weight:normal;color:#000;transform:scaleX(1.1788);">Refrigerators</div>
<div class="t" style="left:315.55px;top:564.32px;font-size:9.7px;font-weight:normal;color:#000;transform:scaleX(1.1633);">60,000</div>
<div class="t" style="left:415.05px;top:565.37px;font-size:9.2px;font-weight:normal;color:#0000FF;transform:scaleX(1.1267);">600</div>
<div class="t" style="left:510.45px;top:565.37px;font-size:9.2px;font-weight:normal;color:#0000FF;transform:scaleX(1.1800);">1</div>
<div class="t" style="left:578.95px;top:565.37px;font-size:9.2px;font-weight:normal;color:#0000FF;transform:scaleX(1.2200);">3</div>
<div class="t" style="left:649.55px;top:564.32px;font-size:9.7px;font-weight:normal;color:#000;transform:scaleX(1.2200);">3</div>
<div class="t" style="left:730.85px;top:564.32px;font-size:9.7px;font-weight:normal;color:#000;transform:scaleX(1.1633);">20,000</div>
<div class="t" style="left:801.65px;top:564.32px;font-size:9.7px;font-weight:normal;color:#000;transform:scaleX(1.1633);">20,000</div>
<div class="t" style="left:860.95px;top:564.32px;font-size:9.7px;font-weight:normal;color:#000;transform:scaleX(1.1633);">20,000</div>
<div class="t" style="left:36.25px;top:579.58px;font-size:10.3px;font-weight:bold;color:#00B050;transform:scaleX(1.0067);">OK</div>
<div class="t" style="left:93.30px;top:579.96px;font-size:9px;font-weight:normal;color:#000;transform:scaleX(1.1657);">Washers</div>
<div class="t" style="left:315.55px;top:579.32px;font-size:9.7px;font-weight:normal;color:#000;transform:scaleX(1.1633);">60,000</div>
<div class="t" style="left:415.05px;top:580.37px;font-size:9.2px;font-weight:normal;color:#0000FF;transform:scaleX(1.1267);">600</div>
<div class="t" style="left:510.45px;top:580.37px;font-size:9.2px;font-weight:normal;color:#0000FF;transform:scaleX(1.1800);">1</div>
<div class="t" style="left:578.95px;top:580.37px;font-size:9.2px;font-weight:normal;color:#0000FF;transform:scaleX(1.2200);">3</div>
<div class="t" style="left:649.55px;top:579.32px;font-size:9.7px;font-weight:normal;color:#000;transform:scaleX(1.2200);">3</div>
<div class="t" style="left:730.85px;top:579.32px;font-size:9.7px;font-weight:normal;color:#000;transform:scaleX(1.1633);">20,000</div>
<div class="t" style="left:801.65px;top:579.32px;font-size:9.7px;font-weight:normal;color:#000;transform:scaleX(1.1633);">20,000</div>
<div class="t" style="left:860.95px;top:579.32px;font-size:9.7px;font-weight:normal;color:#000;transform:scaleX(1.1633);">20,000</div>
<div class="t" style="left:36.25px;top:594.58px;font-size:10.3px;font-weight:bold;color:#00B050;transform:scaleX(1.0067);">OK</div>
<div class="t" style="left:93.30px;top:594.96px;font-size:9px;font-weight:normal;color:#000;transform:scaleX(1.1222);">Dryers</div>
<div class="t" style="left:315.55px;top:594.32px;font-size:9.7px;font-weight:normal;color:#000;transform:scaleX(1.1633);">60,000</div>
<div class="t" style="left:415.05px;top:595.37px;font-size:9.2px;font-weight:normal;color:#0000FF;transform:scaleX(1.1267);">600</div>
<div class="t" style="left:510.45px;top:595.37px;font-size:9.2px;font-weight:normal;color:#0000FF;transform:scaleX(1.1800);">1</div>
<div class="t" style="left:578.95px;top:595.37px;font-size:9.2px;font-weight:normal;color:#0000FF;transform:scaleX(1.2200);">3</div>
<div class="t" style="left:649.55px;top:594.32px;font-size:9.7px;font-weight:normal;color:#000;transform:scaleX(1.2200);">3</div>
<div class="t" style="left:730.85px;top:594.32px;font-size:9.7px;font-weight:normal;color:#000;transform:scaleX(1.1633);">20,000</div>
<div class="t" style="left:801.65px;top:594.32px;font-size:9.7px;font-weight:normal;color:#000;transform:scaleX(1.1633);">20,000</div>
<div class="t" style="left:860.95px;top:594.32px;font-size:9.7px;font-weight:normal;color:#000;transform:scaleX(1.1633);">20,000</div>
<div style="left:2px;top:2px;width:1px;height:604px;background:#a0a0a0"></div>
<div style="left:3px;top:79px;width:1199px;height:1px;background:#c4c4bc"></div>
<div style="left:706px;top:2px;width:1px;height:604px;background:#a6a6a6"></div>
<div style="left:0px;top:0px;width:1204px;height:2px;background:#000"></div>
<div style="left:0px;top:606px;width:1204px;height:2px;background:#000"></div>
<div style="left:0px;top:0px;width:2px;height:608px;background:#000"></div>
<div style="left:1202px;top:0px;width:2px;height:608px;background:#000"></div>
</div></body></html>
